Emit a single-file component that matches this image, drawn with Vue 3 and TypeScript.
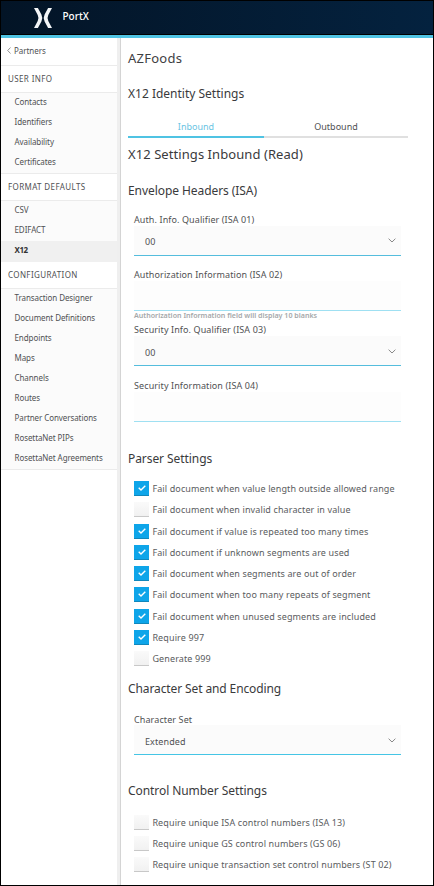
<script setup lang="ts">
import { ref } from 'vue'

interface NavGroup { title: string; items: string[] }
interface Option { label: string; checked: boolean }

const groups: NavGroup[] = [
  { title: 'USER INFO', items: ['Contacts', 'Identifiers', 'Availability', 'Certificates'] },
  { title: 'FORMAT DEFAULTS', items: ['CSV', 'EDIFACT', 'X12'] },
  {
    title: 'CONFIGURATION',
    items: ['Transaction Designer', 'Document Definitions', 'Endpoints', 'Maps', 'Channels', 'Routes',
      'Partner Conversations', 'RosettaNet PIPs', 'RosettaNet Agreements'],
  },
]
const activeItem = ref('X12')

const parserOptions = ref<Option[]>([
  { label: 'Fail document when value length outside allowed range', checked: true },
  { label: 'Fail document when invalid character in value', checked: false },
  { label: 'Fail document if value is repeated too many times', checked: true },
  { label: 'Fail document if unknown segments are used', checked: true },
  { label: 'Fail document when segments are out of order', checked: true },
  { label: 'Fail document when too many repeats of segment', checked: true },
  { label: 'Fail document when unused segments are included', checked: true },
  { label: 'Require 997', checked: true },
  { label: 'Generate 999', checked: false },
])
const controlOptions = ref<Option[]>([
  { label: 'Require unique ISA control numbers (ISA 13)', checked: false },
  { label: 'Require unique GS control numbers (GS 06)', checked: false },
  { label: 'Require unique transaction set control numbers (ST 02)', checked: false },
])
</script>

<template>
  <div class="app">
    <header class="topbar">
      <svg class="logo" viewBox="0 0 18 20">
        <path d="M0 0h3.900L7.400 6.500Q9.200 10 7.400 13.500L3.900 20H0L3.700 13Q5.200 10 3.700 7z" />
        <path d="M18 0h-3.900L10.600 6.500Q8.800 10 10.600 13.500L14.100 20H18L14.300 13Q12.800 10 14.300 7z" />
      </svg>
      <span class="brand">PortX</span>
    </header>
    <div class="body">
      <nav class="sidebar">
        <a class="back">
          <svg class="back-icon" viewBox="0 0 4 7"><path d="M3.500 .5 .7 3.500l2.800 3" /></svg>
          Partners
        </a>
        <section v-for="group in groups" :key="group.title" class="group">
          <h4 class="group-title">{{ group.title }}</h4>
          <ul class="items">
            <li v-for="item in group.items" :key="item" class="item" :class="{ active: item === activeItem }"
              @click="activeItem = item">{{ item }}</li>
          </ul>
        </section>
      </nav>
      <main class="content">
        <h1 class="title">AZFoods</h1>
        <h2 class="heading identity">X12 Identity Settings</h2>
        <div class="tabs">
          <div class="tab selected">Inbound</div>
          <div class="tab">Outbound</div>
        </div>
        <h2 class="subtitle">X12 Settings Inbound (Read)</h2>
        <h3 class="heading envelope">Envelope Headers (ISA)</h3>
        <div class="fields">
          <div class="field">
            <label class="label">Auth. Info. Qualifier (ISA 01)</label>
            <div class="control select">00
              <svg class="chevron" viewBox="0 0 8 5"><path d="M.6 .7 4 4 7.400 .7" /></svg>
            </div>
          </div>
          <div class="field">
            <label class="label">Authorization Information (ISA 02)</label>
            <div class="control input"></div>
            <div class="hint">Authorization Information field will display 10 blanks</div>
          </div>
          <div class="field third">
            <label class="label">Security Info. Qualifier (ISA 03)</label>
            <div class="control select low">00
              <svg class="chevron" viewBox="0 0 8 5"><path d="M.6 .7 4 4 7.400 .7" /></svg>
            </div>
          </div>
          <div class="field">
            <label class="label">Security Information (ISA 04)</label>
            <div class="control input"></div>
          </div>
        </div>
        <h3 class="heading parser">Parser Settings</h3>
        <div class="options">
          <div v-for="o in parserOptions" :key="o.label" class="option" @click="o.checked = !o.checked">
            <span class="box" :class="{ checked: o.checked }">
              <svg v-if="o.checked" class="tick" viewBox="0 0 8 6"><path d="M.7 2.800 3 5 7.300 .8" /></svg>
            </span>
            <span>{{ o.label }}</span>
          </div>
        </div>
        <h3 class="heading charset">Character Set and Encoding</h3>
        <div class="field charset-field">
          <label class="label">Character Set</label>
          <div class="control select bright">Extended
            <svg class="chevron" viewBox="0 0 8 5"><path d="M.6 .7 4 4 7.400 .7" /></svg>
          </div>
        </div>
        <h3 class="heading numbers">Control Number Settings</h3>
        <div class="options">
          <div v-for="o in controlOptions" :key="o.label" class="option" @click="o.checked = !o.checked">
            <span class="box" :class="{ checked: o.checked }">
              <svg v-if="o.checked" class="tick" viewBox="0 0 8 6"><path d="M.7 2.800 3 5 7.300 .8" /></svg>
            </span>
            <span>{{ o.label }}</span>
          </div>
        </div>
      </main>
    </div>
  </div>
</template>

<style>
body { margin: 0; background: #fff; }
</style>

<style scoped>
* { box-sizing: border-box; }
h1, h2, h3, h4, ul { margin: 0; padding: 0; font-weight: 400; list-style: none; }
.app {
  display: flex;
  flex-direction: column;
  width: 434px;
  height: 886px;
  border: 1px solid #000;
  background: #fff;
  color: #505153;
  font-family: "Noto Sans", "Open Sans", sans-serif;
  overflow: hidden;
}
.topbar {
  display: flex;
  align-items: flex-start;
  flex: none;
  height: 37px;
  padding: 7px 0 0 33px;
  border-bottom: 3px solid #4fc3e3;
  background: linear-gradient(90deg, #031426, #04223f);
  box-shadow: inset 0 -1px #000;
}
.logo { width: 18px; height: 20px; fill: #f3f5f7; }
.brand { margin: 1px 0 0 10.5px; color: #fff; font-size: 10px; font-weight: 500; line-height: 14px; }
.body { display: flex; flex: 1; min-height: 0; }
.sidebar { flex: none; width: 120px; border-right: 1px solid #d4d4d4; box-shadow: inset -3px 0 #efefef; font-size: 8px; }
.back {
  display: flex;
  align-items: center;
  gap: 3px;
  width: 116px;
  height: 28px;
  padding: 0 0 2px 6px;
  border-bottom: 1px solid #ebebeb;
  letter-spacing: -.05px;
}
.back-icon { width: 4px; height: 7px; fill: none; stroke: #777; stroke-width: .8; }
.group { width: 116px; }
.group-title {
  height: 27px;
  padding-left: 7px;
  border-bottom: 1px solid #ebebeb;
  font-size: 8px;
  line-height: 26px;
  letter-spacing: .38px;
}
.items { padding-bottom: 1px; background: linear-gradient(#ebebeb, #ebebeb) bottom / 100% 1px no-repeat #fbfbfb; }
.item { height: 20px; padding-left: 13.5px; line-height: 18px; letter-spacing: -.08px; }
.item.active { height: 21px; margin-bottom: -1px; background: #f0f0f0; color: #333; font-weight: 700; letter-spacing: -.45px; }
.content { flex: 1; padding-left: 7px; }
.title { height: 40px; font-size: 13px; line-height: 40px; letter-spacing: .24px; color: #3e4043; }
.subtitle { height: 34px; font-size: 13px; line-height: 32px; letter-spacing: .07px; color: #3a3a3c; }
.heading { font-size: 12px; line-height: 20px; letter-spacing: -.07px; color: #3a3a3c; }
.identity { padding-top: 6px; height: 41px; letter-spacing: 0; }
.tabs { display: flex; width: 280px; height: 19px; }
.tab { width: 144px; border-bottom: 2px solid #e0e0e0; font-size: 9px; line-height: 16px; text-align: center; }
.tab.selected { width: 136px; border-color: #4fc3e3; color: #6ac4e3; }
.envelope { height: 40px; padding-top: 9px; }
.fields { padding-left: 6px; }
.field { width: 273px; height: 55px; }
.fields .field { width: 267px; }
.fields .third { height: 56px; }
.label { display: block; height: 14px; font-size: 9px; line-height: 16px; letter-spacing: .1px; }
.control { width: 267px; height: 30px; border-bottom: 1px solid #9fe0f2; background: #fdfdfd; }
.select {
  display: flex;
  align-items: center;
  justify-content: space-between;
  padding: 2px 5px 0 11px;
  border-color: #55bddd;
  background: #fbfbfb;
  font-size: 9px;
  letter-spacing: .1px;
}
.low { padding-top: 3px; }
.chevron { width: 8px; height: 5px; margin-top: -2px; fill: none; stroke: #888; stroke-width: 1; }
.hint { height: 9px; color: #a5a8aa; font-size: 7.1px; font-weight: 600; line-height: 9px; white-space: nowrap; }
.parser { height: 45px; padding-top: 16px; }
.options { padding-left: 6px; }
.option { display: flex; align-items: center; gap: 3.4px; height: 21.25px; font-size: 9px; letter-spacing: .12px; color: #5a5c5e; }
.box {
  display: flex;
  align-items: center;
  justify-content: center;
  width: 15px;
  height: 15px;
  border-bottom: 1px solid #c8c8c8;
  background: linear-gradient(#fafafa, #f1f1f1);
}
.box.checked { border-color: #1187bb; background: #0ea5e9; }
.tick { width: 8px; height: 6px; fill: none; stroke: #fff; stroke-width: 1.400; }
.charset { height: 41.75px; padding-top: 10px; letter-spacing: -.11px; }
.charset-field { padding-left: 6px; height: 56px; }
.charset-field .label { line-height: 18px; }
.bright { padding-top: 3px; border-color: #45c5e5; }
.numbers { height: 44.7px; padding-top: 14px; }
</style>
